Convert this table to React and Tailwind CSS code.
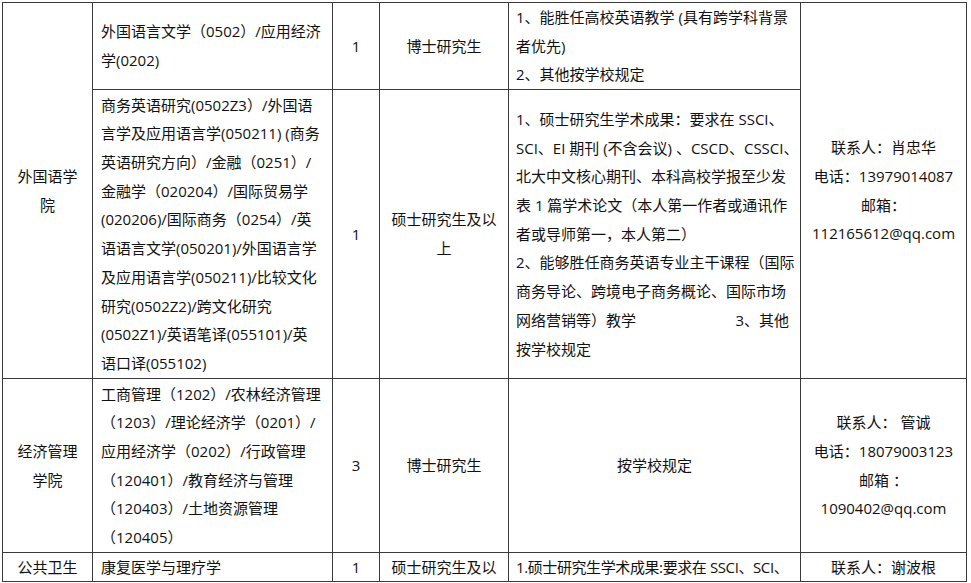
import React from 'react';

const font = { fontFamily: '"Open Sans", "Noto Sans CJK SC", sans-serif' };

function Lines({ lines, center }) {
  return (
    <div className={center ? 'text-center' : 'text-left'}>
      {lines.map((l, i) => (
        <div key={i} className="whitespace-nowrap">{l}</div>
      ))}
    </div>
  );
}

export default function App() {
  const cell = 'border border-[#3a3a3a] align-middle p-0';
  const pad = 'px-[8px]';

  return (
    <div className="w-[971px] h-[583px] overflow-hidden bg-white pl-[2px] pt-[2px]">
      <table
        className="table-fixed border-collapse w-[964px] text-[15px] leading-[28.7px] text-[#111]"
        style={font}
      >
        <colgroup>
          <col className="w-[90px]" />
          <col className="w-[240px]" />
          <col className="w-[47px]" />
          <col className="w-[129px]" />
          <col className="w-[292px]" />
          <col className="w-[166px]" />
        </colgroup>
        <tbody>
          <tr className="h-[87px]">
            <td rowSpan={2} className={cell}>
              <Lines center lines={['外国语学', '院']} />
            </td>
            <td className={`${cell} ${pad}`}>
              <Lines lines={['外国语言文学（0502）/应用经济', '学(0202)']} />
            </td>
            <td className={cell}>
              <Lines center lines={['1']} />
            </td>
            <td className={cell}>
              <Lines center lines={['博士研究生']} />
            </td>
            <td className={`${cell} pl-[7px] pr-[8px]`}>
              <Lines
                lines={[
                  '1、能胜任高校英语教学 (具有跨学科背景',
                  '者优先)',
                  '2、其他按学校规定',
                ]}
              />
            </td>
            <td rowSpan={2} className={cell}>
              <Lines
                center
                lines={['联系人：肖忠华', '电话：13979014087', '邮箱：', '112165612@qq.com']}
              />
            </td>
          </tr>

          <tr className="h-[289px]">
            <td className={`${cell} ${pad}`}>
              <Lines
                lines={[
                  '商务英语研究(0502Z3）/外国语',
                  '言学及应用语言学(050211) (商务',
                  '英语研究方向）/金融（0251）/',
                  '金融学（020204）/国际贸易学',
                  '(020206)/国际商务（0254）/英',
                  '语语言文学(050201)/外国语言学',
                  '及应用语言学(050211)/比较文化',
                  '研究(0502Z2)/跨文化研究',
                  '(0502Z1)/英语笔译(055101)/英',
                  '语口译(055102)',
                ]}
              />
            </td>
            <td className={cell}>
              <Lines center lines={['1']} />
            </td>
            <td className={cell}>
              <Lines center lines={['硕士研究生及以', '上']} />
            </td>
            <td className={`${cell} pl-[7px] pr-[8px]`}>
              <div className="text-left">
                <div className="whitespace-nowrap">1、硕士研究生学术成果：要求在 SSCI、</div>
                <div className="whitespace-nowrap">SCI、EI 期刊 (不含会议) 、CSCD、CSSCI、</div>
                <div className="whitespace-nowrap">北大中文核心期刊、本科高校学报至少发</div>
                <div className="whitespace-nowrap">表 1 篇学术论文（本人第一作者或通讯作</div>
                <div className="whitespace-nowrap">者或导师第一，本人第二）</div>
                <div className="whitespace-nowrap">2、能够胜任商务英语专业主干课程（国际</div>
                <div className="whitespace-nowrap">商务导论、跨境电子商务概论、国际市场</div>
                <div className="flex justify-between whitespace-nowrap pr-[3px]">
                  <span>网络营销等）教学</span>
                  <span>3、其他</span>
                </div>
                <div className="whitespace-nowrap">按学校规定</div>
              </div>
            </td>
          </tr>

          <tr className="h-[174px]">
            <td className={cell}>
              <Lines center lines={['经济管理', '学院']} />
            </td>
            <td className={`${cell} ${pad}`}>
              <Lines
                lines={[
                  '工商管理（1202）/农林经济管理',
                  '（1203）/理论经济学（0201）/',
                  '应用经济学（0202）/行政管理',
                  '（120401）/教育经济与管理',
                  '（120403）/土地资源管理',
                  '（120405）',
                ]}
              />
            </td>
            <td className={cell}>
              <Lines center lines={['3']} />
            </td>
            <td className={cell}>
              <Lines center lines={['博士研究生']} />
            </td>
            <td className={cell}>
              <Lines center lines={['按学校规定']} />
            </td>
            <td className={cell}>
              <Lines
                center
                lines={['联系人：  管诚', '电话：18079003123', '邮箱 ：', '1090402@qq.com']}
              />
            </td>
          </tr>

          <tr className="h-[29px]">
            <td className={cell}>
              <div className="h-[28px] overflow-hidden text-center">公共卫生</div>
            </td>
            <td className={`${cell} ${pad}`}>
              <div className="h-[28px] overflow-hidden whitespace-nowrap">康复医学与理疗学</div>
            </td>
            <td className={cell}>
              <div className="h-[28px] overflow-hidden text-center">1</div>
            </td>
            <td className={cell}>
              <div className="h-[28px] overflow-hidden text-center whitespace-nowrap">硕士研究生及以</div>
            </td>
            <td className={`${cell} pl-[7px] pr-[4px]`}>
              <div className="h-[28px] overflow-hidden whitespace-nowrap tracking-[-0.4px]">1.硕士研究生学术成果:要求在 SSCI、SCI、</div>
            </td>
            <td className={cell}>
              <div className="h-[28px] overflow-hidden text-center">联系人：谢波根</div>
            </td>
          </tr>
        </tbody>
      </table>
    </div>
  );
}
